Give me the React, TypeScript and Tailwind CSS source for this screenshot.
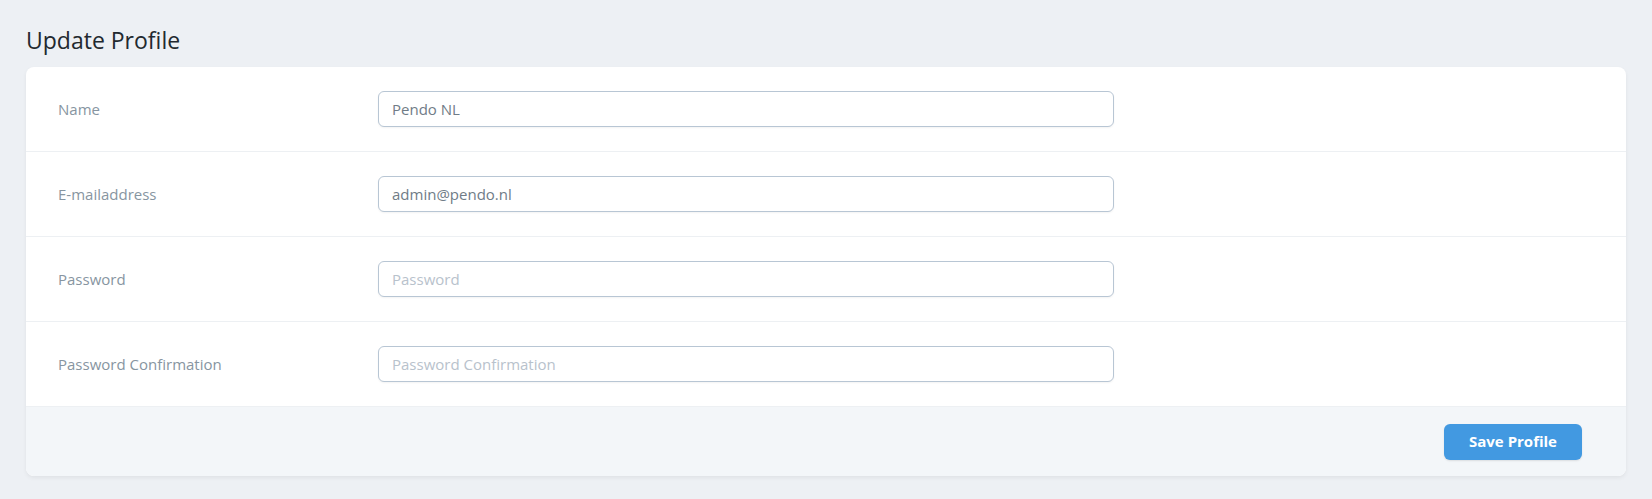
import { useState } from "react"

const fields = [
    { label: "Name", type: "text", value: "Pendo NL", placeholder: "Name" },
    { label: "E-mailaddress", type: "email", value: "admin@pendo.nl", placeholder: "E-mailaddress" },
    { label: "Password", type: "password", value: "", placeholder: "Password" },
    { label: "Password Confirmation", type: "password", value: "", placeholder: "Password Confirmation" },
]

export default function App() {
    const [values, setValues] = useState(fields.map((f) => f.value))

    return (
        <main
            className="min-h-[499px] w-full bg-[#edf0f4] px-[26px] pt-[24px]"
            style={{ fontFamily: "'Open Sans', Lato, sans-serif" }}
        >
            <h1 className="text-[23px] leading-8 text-[#22292f] mb-[11px]">Update Profile</h1>

            {/* Card */}
            <section className="bg-white rounded-lg shadow-[0_2px_4px_rgba(0,0,0,0.06)]">
                {fields.map((f, i) => (
                    <div
                        key={f.label}
                        className="flex items-center h-[85px] px-8 border-b border-[#edf0f3]"
                    >
                        <label className="w-[320px] shrink-0 text-[15px] text-[#8795a1]">{f.label}</label>
                        <input
                            type={f.type}
                            value={values[i]}
                            placeholder={f.placeholder}
                            onChange={(e) => {
                                const next = [...values]
                                next[i] = e.target.value
                                setValues(next)
                            }}
                            className="w-[736px] h-[36px] px-[13px] rounded-md border border-[#b8c6d4] bg-white text-[15px] text-[#707c87] placeholder:text-[#b8c2cc] shadow-[0_1px_2px_rgba(0,0,0,0.05)] outline-none"
                        />
                    </div>
                ))}

                {/* Footer */}
                <div className="flex justify-end items-center h-[69px] px-[44px] bg-[#f3f6f9] rounded-b-lg">
                    <button className="w-[138px] h-[36px] rounded-md bg-[#4299e1] text-white text-[15px] font-bold shadow-[0_1px_2px_rgba(0,0,0,0.1)]">
                        Save Profile
                    </button>
                </div>
            </section>
        </main>
    )
}
